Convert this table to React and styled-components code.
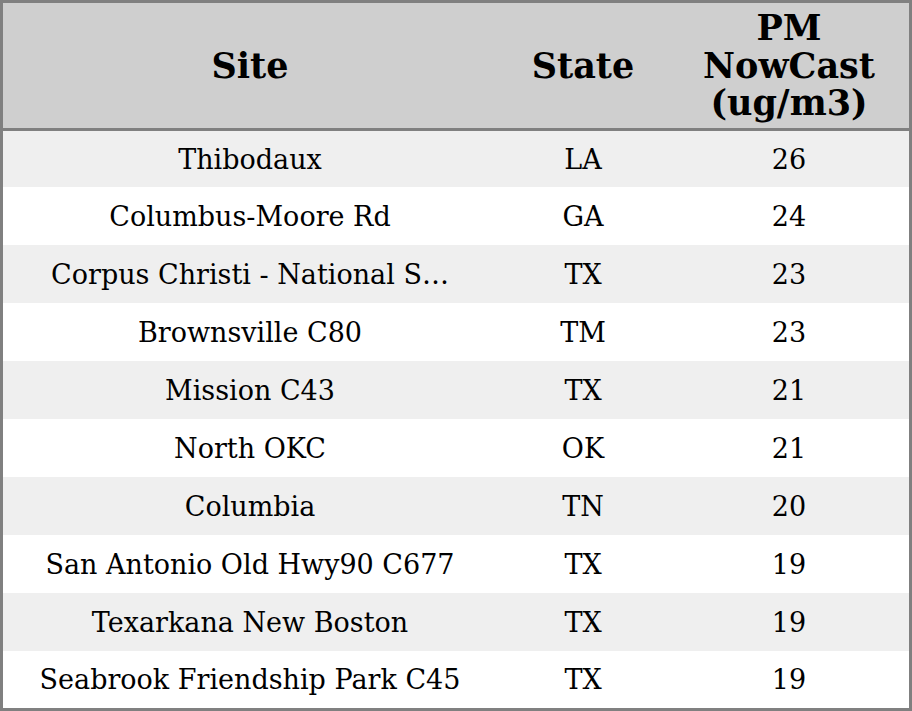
import React from "react";
import styled, { createGlobalStyle } from "styled-components";

const Global = createGlobalStyle`
  html, body { margin: 0; padding: 0; background: #ffffff; }
  * { box-sizing: border-box; }
`;

const Table = styled.div`
  width: 912px;
  height: 711px;
  border: 3px solid #808080;
  display: flex;
  flex-direction: column;
  font-family: "DejaVu Serif", "Liberation Serif", serif;
  color: #000;
`;

const cols = "494px 172px 240px";

const HeaderRow = styled.div`
  display: grid;
  grid-template-columns: ${cols};
  height: 128px;
  background: #cfcfcf;
  border-bottom: 3px solid #808080;
`;

const HeaderCell = styled.div`
  display: flex;
  align-items: center;
  justify-content: center;
  text-align: center;
  font-weight: bold;
  font-size: 35px;
  line-height: 37.5px;
`;

const BodyRow = styled.div`
  display: grid;
  grid-template-columns: ${cols};
  height: ${(p) => p.$h}px;
  background: ${(p) => (p.$striped ? "#efefef" : "#ffffff")};
`;

const Cell = styled.div`
  display: flex;
  align-items: center;
  justify-content: center;
  text-align: center;
  font-size: 27px;
  white-space: nowrap;
  overflow: hidden;
`;

const rows = [
  ["Thibodaux", "LA", "26"],
  ["Columbus-Moore Rd", "GA", "24"],
  ["Corpus Christi - National S…", "TX", "23"],
  ["Brownsville C80", "TM", "23"],
  ["Mission C43", "TX", "21"],
  ["North OKC", "OK", "21"],
  ["Columbia", "TN", "20"],
  ["San Antonio Old Hwy90 C677", "TX", "19"],
  ["Texarkana New Boston", "TX", "19"],
  ["Seabrook Friendship Park C45", "TX", "19"],
];

const heights = [56, 58, 58, 58, 58, 58, 58, 58, 58, 57];

export default function App() {
  return (
    <>
      <Global />
      <Table>
        <HeaderRow>
          <HeaderCell>Site</HeaderCell>
          <HeaderCell>State</HeaderCell>
          <HeaderCell>
            PM
            <br />
            NowCast
            <br />
            (ug/m3)
          </HeaderCell>
        </HeaderRow>
        {rows.map((r, i) => (
          <BodyRow key={i} $h={heights[i]} $striped={i % 2 === 0}>
            <Cell>{r[0]}</Cell>
            <Cell>{r[1]}</Cell>
            <Cell>{r[2]}</Cell>
          </BodyRow>
        ))}
      </Table>
    </>
  );
}
